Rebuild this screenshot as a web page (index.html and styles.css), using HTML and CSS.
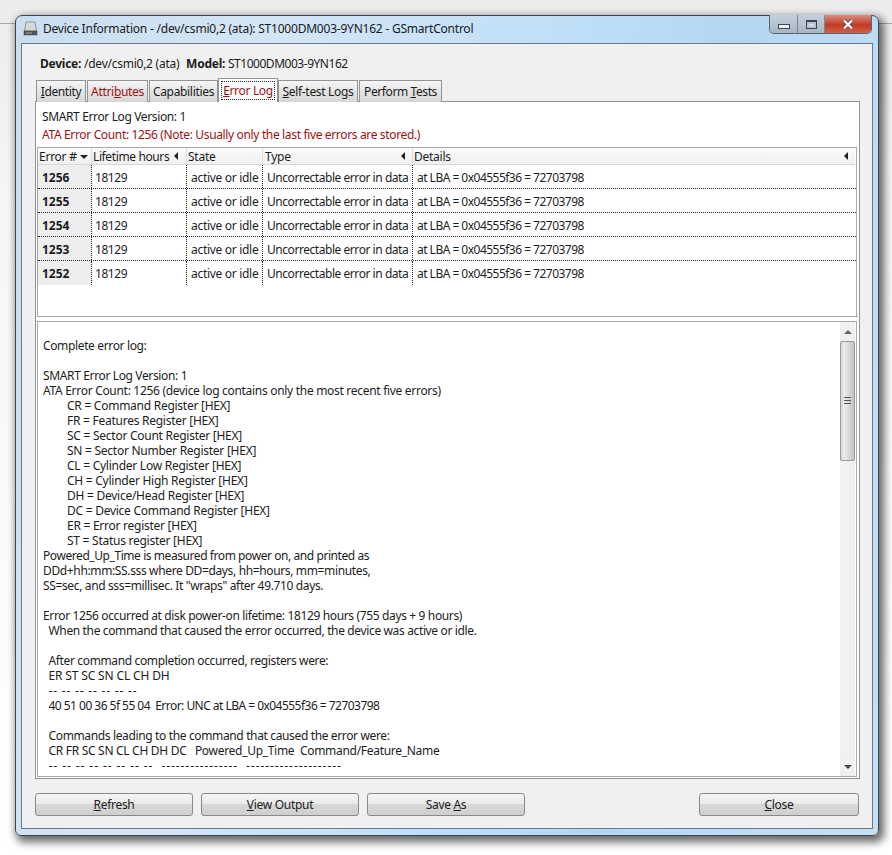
FILE: index.html
```html
<!DOCTYPE html>
<html lang="en">
<head>
<meta charset="utf-8">
<title>GSmartControl</title>
<link rel="stylesheet" href="styles.css">
</head>
<body>
<div class="desktop-line"></div>
<div class="window">
  <div class="titlebar">
    <svg class="app-icon" width="15" height="15" viewBox="0 0 15 15"><path d="M3 1h9l1.5 9h-12z" fill="#d8d8d8" stroke="#777" stroke-width=".7"/><rect x="1" y="10" width="13" height="4" fill="#555" stroke="#444" stroke-width=".5"/><rect x="3" y="11.5" width="6" height="1" fill="#aaa"/></svg>
    <span class="title">Device Information - /dev/csmi0,2 (ata): ST1000DM003-9YN162 - GSmartControl</span>
    <div class="controls">
      <div class="ctl ctl-min"><span class="glyph-min"></span></div>
      <div class="ctl ctl-max"><span class="glyph-max"></span></div>
      <div class="ctl ctl-close"><svg width="12" height="11" viewBox="0 0 12 11"><path d="M2 1.5l8 8M10 1.5l-8 8" stroke="#444" stroke-width="3.6"/><path d="M2 1.5l8 8M10 1.5l-8 8" stroke="#fff" stroke-width="2.2"/></svg></div>
    </div>
  </div>
  <div class="client">
    <div class="device-line"><b>Device:</b> /dev/csmi0,2 (ata)&nbsp; <b class="model-label">Model:</b> <span class="model">ST1000DM003-9YN162</span></div>
    <div class="tabs">
      <div class="tab tab-1"><u>I</u>dentity</div>
      <div class="tab tab-2 red">Attri<u>b</u>utes</div>
      <div class="tab tab-3">Capabilities</div>
      <div class="tab tab-4 active red"><span class="focus"><u>E</u>rror Log</span></div>
      <div class="tab tab-5"><u>S</u>elf-test Logs</div>
      <div class="tab tab-6">Perform <u>T</u>ests</div>
    </div>
    <div class="notebook">
      <div class="top-pane">
        <div class="info">SMART Error Log Version: 1</div>
        <div class="info red">ATA Error Count: 1256 (Note: Usually only the last five errors are stored.)</div>
        <div class="tree">
          <div class="row head">
            <div class="c c1">Error # <i class="arrow-down"></i></div>
            <div class="c c2">Lifetime hours <i class="arrow-left"></i></div>
            <div class="c c3">State</div>
            <div class="c c4">Type <i class="arrow-left"></i></div>
            <div class="c c5">Details <i class="arrow-left"></i></div>
          </div>
          <div class="row"><div class="c c1 num">1256</div><div class="c c2">18129</div><div class="c c3">active or idle</div><div class="c c4">Uncorrectable error in data</div><div class="c c5">at LBA = 0x04555f36 = 72703798</div></div>
          <div class="row"><div class="c c1 num">1255</div><div class="c c2">18129</div><div class="c c3">active or idle</div><div class="c c4">Uncorrectable error in data</div><div class="c c5">at LBA = 0x04555f36 = 72703798</div></div>
          <div class="row"><div class="c c1 num">1254</div><div class="c c2">18129</div><div class="c c3">active or idle</div><div class="c c4">Uncorrectable error in data</div><div class="c c5">at LBA = 0x04555f36 = 72703798</div></div>
          <div class="row"><div class="c c1 num">1253</div><div class="c c2">18129</div><div class="c c3">active or idle</div><div class="c c4">Uncorrectable error in data</div><div class="c c5">at LBA = 0x04555f36 = 72703798</div></div>
          <div class="row"><div class="c c1 num">1252</div><div class="c c2">18129</div><div class="c c3">active or idle</div><div class="c c4">Uncorrectable error in data</div><div class="c c5">at LBA = 0x04555f36 = 72703798</div></div>
        </div>
      </div>
      <div class="log-pane">
        <pre class="log">
Complete error log:

SMART Error Log Version: 1
<span class="mid">ATA Error Count: 1256 (device log contains only the most recent five errors)</span>
<span class="ind">CR = Command Register [HEX]</span>
<span class="ind">FR = Features Register [HEX]</span>
<span class="ind">SC = Sector Count Register [HEX]</span>
<span class="ind">SN = Sector Number Register [HEX]</span>
<span class="ind">CL = Cylinder Low Register [HEX]</span>
<span class="ind">CH = Cylinder High Register [HEX]</span>
<span class="ind">DH = Device/Head Register [HEX]</span>
<span class="ind">DC = Device Command Register [HEX]</span>
<span class="ind">ER = Error register [HEX]</span>
<span class="ind">ST = Status register [HEX]</span>
<span class="narrow">Powered_Up_Time is measured from power on, and printed as</span>
DDd+hh:mm:SS.sss where DD=days, hh=hours, mm=minutes,
SS=sec, and sss=millisec. It "wraps" after 49.710 days.

Error 1256 occurred at disk power-on lifetime: 18129 hours (755 days + 9 hours)
  When the command that caused the error occurred, the device was active or idle.

  After command completion occurred, registers were:
  <span class="wide">ER ST SC SN CL CH DH</span>
  <span class="dash-a">-- -- -- -- -- -- --</span>
  <span class="tight">40 51 00 36 5f 55 04  Error: UNC at LBA = 0x04555f36 = 72703798</span>

  Commands leading to the command that caused the error were:
  <span class="mid">CR FR SC SN CL CH DH DC   Powered_Up_Time  Command/Feature_Name</span>
  <span class="dash-b">-- -- -- -- -- -- -- --  ----------------  --------------------</span></pre>
        <div class="scrollbar">
          <div class="sb-btn"><i class="sb-up"></i></div>
          <div class="sb-thumb"><i class="grip"></i><i class="grip"></i><i class="grip"></i></div>
          <div class="sb-track"></div>
          <div class="sb-btn"><i class="sb-down"></i></div>
        </div>
      </div>
    </div>
    <div class="buttons">
      <div class="btn"><span><u>R</u>efresh</span></div>
      <div class="btn"><span><u>V</u>iew Output</span></div>
      <div class="btn"><span>Save <u>A</u>s</span></div>
      <div class="spacer"></div>
      <div class="btn btn-close"><span><u>C</u>lose</span></div>
    </div>
  </div>
</div>
</body>
</html>
```
FILE: styles.css
```css
* { box-sizing: border-box; }
html, body { margin: 0; height: 855px; overflow: hidden; }
body {
  background: linear-gradient(#ececec, #f6f6f6 200px, #ffffff 800px);
  padding: 15px 13px 19px 15px;
  font-family: "Noto Sans", "Liberation Sans", sans-serif;
  font-size: 12px;
  color: #1c1c1c;
  position: relative;
}
.desktop-line { position: absolute; left: 0; right: 0; top: 23px; height: 1px; background: #a8a8a8; }
.window {
  position: relative;
  width: 864px;
  height: 821px;
  border: 1px solid #3c4650;
  border-radius: 7px 7px 6px 6px;
  background: linear-gradient(100deg, #c9def0 0%, #d4e6f6 25%, #bfdff9 55%, #b5d6f2 72%, #c6e0f6 100%);
  box-shadow: 3px 4px 9px 2px rgba(0,0,0,.6);
  display: flex;
  flex-direction: column;
}
.titlebar { height: 27px; display: flex; align-items: flex-start; padding: 5px 0 0 7px; flex: none; }
.app-icon { flex: none; }
.title { margin-left: 5px; line-height: 16px; font-size: 12px; letter-spacing: -.22px; color: #1a1a1a; white-space: nowrap; }
.controls {
  position: absolute; top: -1px; right: 6px; height: 19px; display: flex;
  border: 1px solid #59636e; border-top: 0; border-radius: 0 0 5px 5px; overflow: hidden;
}
.ctl { display: flex; align-items: center; justify-content: center; height: 18px; }
.ctl-min { width: 28px; background: linear-gradient(#c4d0dc, #a8b6c4); border-right: 1px solid #7c8894; }
.ctl-max { width: 27px; background: linear-gradient(#c4d0dc, #a8b6c4); border-right: 1px solid #7c8894; }
.ctl-close { width: 46px; background: linear-gradient(#d98f80, #c23b26 55%, #d0604c); }
.glyph-min { width: 12px; height: 5px; background: #eef2f6; border: 1px solid #3c4650; margin-top: 5px; }
.glyph-max { width: 11px; height: 9px; border: 1px solid #3c4650; border-top-width: 2px; background: #d8e0e8; box-shadow: inset 0 0 0 2px #b7c3cf; }
.client {
  flex: 1;
  margin: 0 5px 6px;
  border: 1px solid #6b7a88;
  background: #f0f0f0;
  padding: 0 12px 0 13px;
  display: flex;
  flex-direction: column;
  min-height: 0;
}
.device-line { height: 35px; line-height: 15px; padding: 12px 0 0 5px; white-space: nowrap; letter-spacing: -.25px; }
.model-label { margin-left: 1px; }
.model { letter-spacing: -.47px; }
.tabs { display: flex; height: 23px; flex: none; position: relative; z-index: 1; margin-bottom: -1px; padding-left: 1px; }
.tab {
  height: 22px; margin-top: 1px; line-height: 21px; text-align: center; white-space: nowrap;
  border: 1px solid #8f9499; border-bottom: 0; margin-right: 1px;
  background: linear-gradient(#f6f6f6, #e4e4e4 50%, #d6d6d6);
  letter-spacing: -.32px;
}
.tab-1 { width: 50px; letter-spacing: -.4px; }
.tab-2 { width: 61px; }
.tab-3 { width: 69px; }
.tab-4 { width: 60px; }
.tab-5 { width: 80px; }
.tab-6 { width: 83px; letter-spacing: -.4px; }
.tab.active { height: 24px; margin-top: -1px; background: #fff; padding: 2px; line-height: 17px; margin-left: -1px; margin-right: 0; }
.focus { display: block; border: 1px dotted #222; height: 19px; }
.red { color: #a01010; }
.notebook {
  height: 678px; flex: none; border: 1px solid #8f9499; background: #fff;
  padding: 0 1px 1px; display: flex; flex-direction: column;
}
.top-pane { height: 215px; flex: none; border-bottom: 1px solid #a8a8a8; }
.info { height: 17px; line-height: 15px; padding: 8px 0 0 5px; letter-spacing: -.37px; }
.info:first-child { height: 24px; padding-top: 7px; }
.info.red { height: 21px; padding-top: 1px; letter-spacing: -.35px; }
.tree { border: 1px solid #a8a8a8; border-bottom: 0; height: 170px; margin-right: 1px; }
.row { display: flex; height: 24px; border-bottom: 1px dotted #222; }
.row:last-child { border-bottom: 0; }
.row.head { height: 17px; border-bottom: 1px solid #d8d8d8; background: linear-gradient(#fafafa, #f0f0f0); margin-right: 1px; }
.c { line-height: 25px; padding-left: 4px; white-space: nowrap; letter-spacing: -.25px; border-right: 1px dotted #222; position: relative; }
.head .c { line-height: 17px; padding-left: 1px; border-right: 1px solid #dcdcdc; }
.c1 { width: 54px; }
.c2 { width: 95px; padding-left: 3px; letter-spacing: -.45px; }
.c3 { width: 76px; letter-spacing: -.3px; }
.c4 { width: 150px; letter-spacing: -.45px; }
.c5 { flex: 1; border-right: 0; letter-spacing: -.52px; }
.head .c2 { letter-spacing: -.38px; }
.head .c3, .head .c4, .head .c5 { letter-spacing: -.25px; }
.head .c4 { padding-left: 2px; }
.head .c5 { border-right: 0; }
.num { font-weight: 700; background: #eeeeee; padding-left: 4px; letter-spacing: 0; }
.arrow-down, .arrow-left { position: absolute; top: 6px; width: 0; height: 0; border-style: solid; }
.arrow-down { right: 3px; border-width: 4px 4px 0; border-color: #222 transparent transparent; top: 7px; }
.arrow-left { right: 7px; border-width: 4px 4px 4px 0; border-color: transparent #222 transparent transparent; top: 4px; }
.head .c2 .arrow-left { right: 8px; }
.log-pane { flex: 1; min-height: 0; margin-top: 4px; border: 1px solid #a8a8a8; display: flex; margin-right: 1px; }
.log {
  flex: 1; margin: 0; padding: 16px 0 0 5px; overflow: hidden;
  font: inherit; line-height: 15px; letter-spacing: -.36px; white-space: pre;
}
.ind { padding-left: 24px; letter-spacing: -.26px; }
.wide { letter-spacing: -.15px; }
.mid { letter-spacing: -.3px; }
.narrow { letter-spacing: -.43px; }
.tight { letter-spacing: -.53px; }
.dash-a { letter-spacing: .8px; }
.dash-b { letter-spacing: .92px; }
.scrollbar { width: 15px; flex: none; margin-right: 1px; padding-top: 1px; display: flex; flex-direction: column; background: #f1f1f1; }
.sb-btn { height: 18px; display: flex; align-items: center; justify-content: center; flex: none; background: #f0f0f0; }
.sb-up { border: 4px solid transparent; border-top: 0; border-bottom: 4px solid #666; }
.sb-down { border: 4px solid transparent; border-bottom: 0; border-top: 4px solid #444; }
.sb-thumb {
  height: 120px; flex: none; border: 1px solid #9a9a9a; border-radius: 2px;
  background: linear-gradient(90deg, #d4d4d4, #ececec 25%, #d8d8d8 60%, #c4c4c4);
  display: flex; flex-direction: column; justify-content: center; align-items: center; gap: 1px;
}
.grip { display: block; width: 7px; height: 1px; background: #555; margin-bottom: 1px; }
.sb-track { flex: 1; }
.buttons { display: flex; gap: 8px; margin-top: 14px; margin-right: 1px; height: 23px; flex: none; }
.btn {
  width: 158px; height: 23px; border: 1px solid #8a8a8a; border-radius: 3px;
  background: linear-gradient(#f4f4f4, #ebebeb 45%, #d8d8d8 50%, #cfcfcf);
  display: flex; align-items: center; justify-content: center; letter-spacing: -.3px;
}
.btn-close { width: 160px; }
.spacer { flex: 1; }
```
